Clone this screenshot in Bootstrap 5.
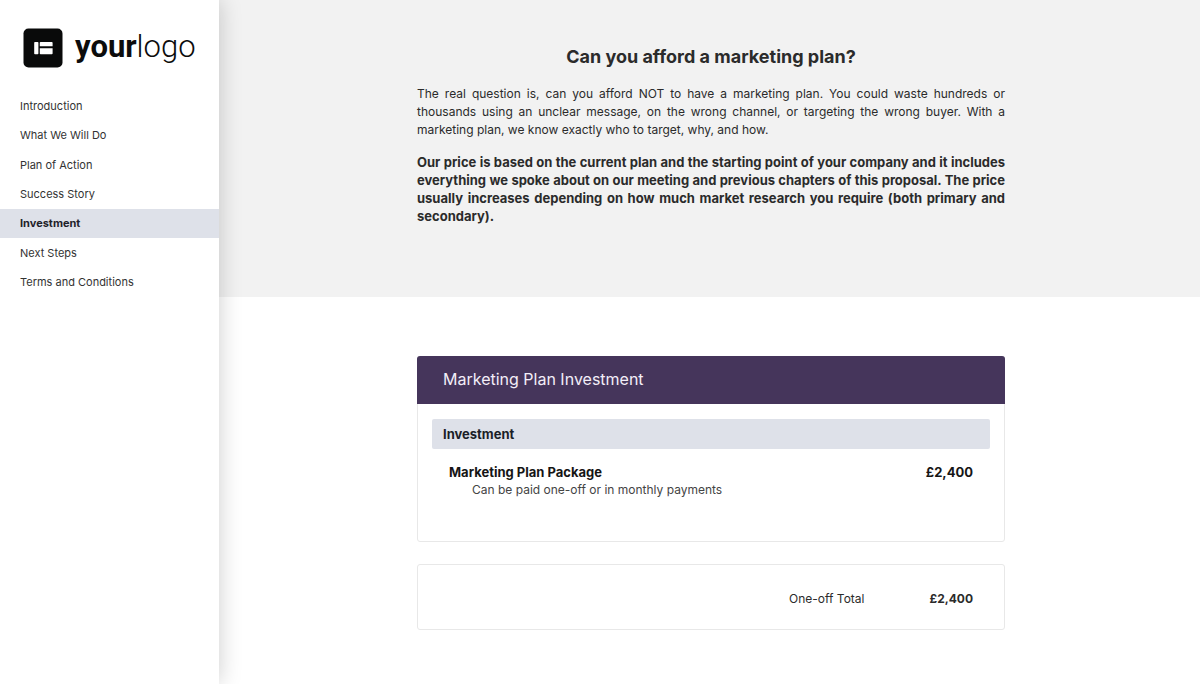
<!DOCTYPE html>
<html lang="en">
<head>
<meta charset="utf-8">
<meta name="viewport" content="width=device-width, initial-scale=1">
<title>Marketing Plan Proposal</title>
<link href="https://cdn.jsdelivr.net/npm/bootstrap@5.3.0/dist/css/bootstrap.min.css" rel="stylesheet">
<style>
  body { font-family: Inter, "Liberation Sans", sans-serif; font-size: 12px; line-height: 18px; color: #2b2b2b; }
  .sidebar { width: 219px; box-shadow: 0 0 22px rgba(0, 0, 0, .2); z-index: 1; }
  .brand { padding: 28px 23px 23px; color: #0c0c0c; gap: 12px; }
  .brand svg { width: 40px; height: 40px; }
  .brand-name { font-family: Roboto, "Liberation Sans", sans-serif; font-size: 31px; line-height: 36px; font-weight: 300; padding-bottom: 2px; }
  .brand-name b { font-weight: 700; }
  .chapters { height: 206px; font-size: 11px; }
  .chapters .nav-link { color: #333; padding: 0 20px; }
  .chapters .nav-link.active { background: #dee1e9; color: #1e222a; font-weight: 700; }
  .measure { max-width: 588px; }
  .intro { background: #f2f2f2; padding: 46px 0 72px 3px; }
  .intro h1 { font-size: 18px; line-height: 22px; font-weight: 700; margin-bottom: 17px; }
  .intro p { text-align: justify; margin-bottom: 14px; }
  .intro .key-point, .price-list strong, .price-list th { font-size: 13px; }
  .pricing { padding: 59px 0 53px 3px; }
  .quote { border: 1px solid #e8e8e8; border-radius: 3px; }
  .quote-title { background: #45355b; color: #f3eef8; font-size: 16px; line-height: 24px; font-weight: 400; padding: 11px 26px 13px; margin: -1px -1px 0; border-radius: 3px 3px 0 0; }
  .quote-body { padding: 15px 14px 43px; }
  .price-list { border-collapse: separate; border-spacing: 0; }
  .price-list thead th { background: #dee1e9; color: #1b1e28; border-radius: 2px; padding: 6px 11px; }
  .price-list td { padding: 15px 17px 0; vertical-align: top; color: #444; line-height: 17px; }
  .price-list strong { color: #151515; }
  .price-list .option { padding-left: 23px; }
  .total { padding: 25px 31px 21px; margin-top: 22px; gap: 65px; }
</style>
</head>
<body>
<div class="d-flex min-vh-100">
  <aside class="sidebar bg-white flex-shrink-0 position-relative">
    <a href="#" class="brand d-flex align-items-center text-decoration-none">
      <svg class="flex-shrink-0" viewBox="0 0 40 40" aria-hidden="true">
        <rect x=".5" y=".5" width="39" height="39" rx="5" fill="#090a0a"/>
        <rect x="11.2" y="14" width="4.2" height="12.2" rx=".8" fill="#fff"/>
        <path d="M17.6 14H28.8Q29.6 14 29.6 14.8V18.3H16.8V14.8Q16.8 14 17.6 14ZM16.8 20.2H29.6V25.4Q29.6 26.2 28.8 26.2H17.6Q16.8 26.2 16.8 25.4Z" fill="#fff"/>
      </svg>
      <span class="brand-name"><b>your</b>logo</span>
    </a>
    <nav class="chapters nav flex-column flex-nowrap" aria-label="Chapters">
      <a class="nav-link flex-fill d-flex align-items-center" href="#">Introduction</a>
      <a class="nav-link flex-fill d-flex align-items-center" href="#">What We Will Do</a>
      <a class="nav-link flex-fill d-flex align-items-center" href="#">Plan of Action</a>
      <a class="nav-link flex-fill d-flex align-items-center" href="#">Success Story</a>
      <a class="nav-link flex-fill d-flex align-items-center active" aria-current="page" href="#">Investment</a>
      <a class="nav-link flex-fill d-flex align-items-center" href="#">Next Steps</a>
      <a class="nav-link flex-fill d-flex align-items-center" href="#">Terms and Conditions</a>
    </nav>
  </aside>
  <main class="flex-grow-1">
    <section class="intro">
      <div class="measure mx-auto">
        <h1 class="text-center">Can you afford a marketing plan?</h1>
        <p>The real question is, can you afford NOT to have a marketing plan. You could waste hundreds or thousands using an unclear message, on the wrong channel, or targeting the wrong buyer. With a marketing plan, we know exactly who to target, why, and how.</p>
        <p class="key-point fw-bold mb-0">Our price is based on the current plan and the starting point of your company and it includes everything we spoke about on our meeting and previous chapters of this proposal. The price usually increases depending on how much market research you require (both primary and secondary).</p>
      </div>
    </section>
    <section class="pricing">
      <div class="measure mx-auto">
        <div class="quote">
          <h2 class="quote-title">Marketing Plan Investment</h2>
          <div class="quote-body">
            <table class="price-list w-100">
              <thead><tr><th colspan="2" scope="colgroup">Investment</th></tr></thead>
              <tbody>
                <tr>
                  <td><strong>Marketing Plan Package</strong><div class="option">Can be paid one-off or in monthly payments</div></td>
                  <td class="text-end"><strong>£2,400</strong></td>
                </tr>
              </tbody>
            </table>
          </div>
        </div>
        <div class="quote total d-flex justify-content-end">
          <span>One-off Total</span><strong>£2,400</strong>
        </div>
      </div>
    </section>
  </main>
</div>
<script src="https://cdn.jsdelivr.net/npm/bootstrap@5.3.0/dist/js/bootstrap.bundle.min.js"></script>
</body>
</html>
